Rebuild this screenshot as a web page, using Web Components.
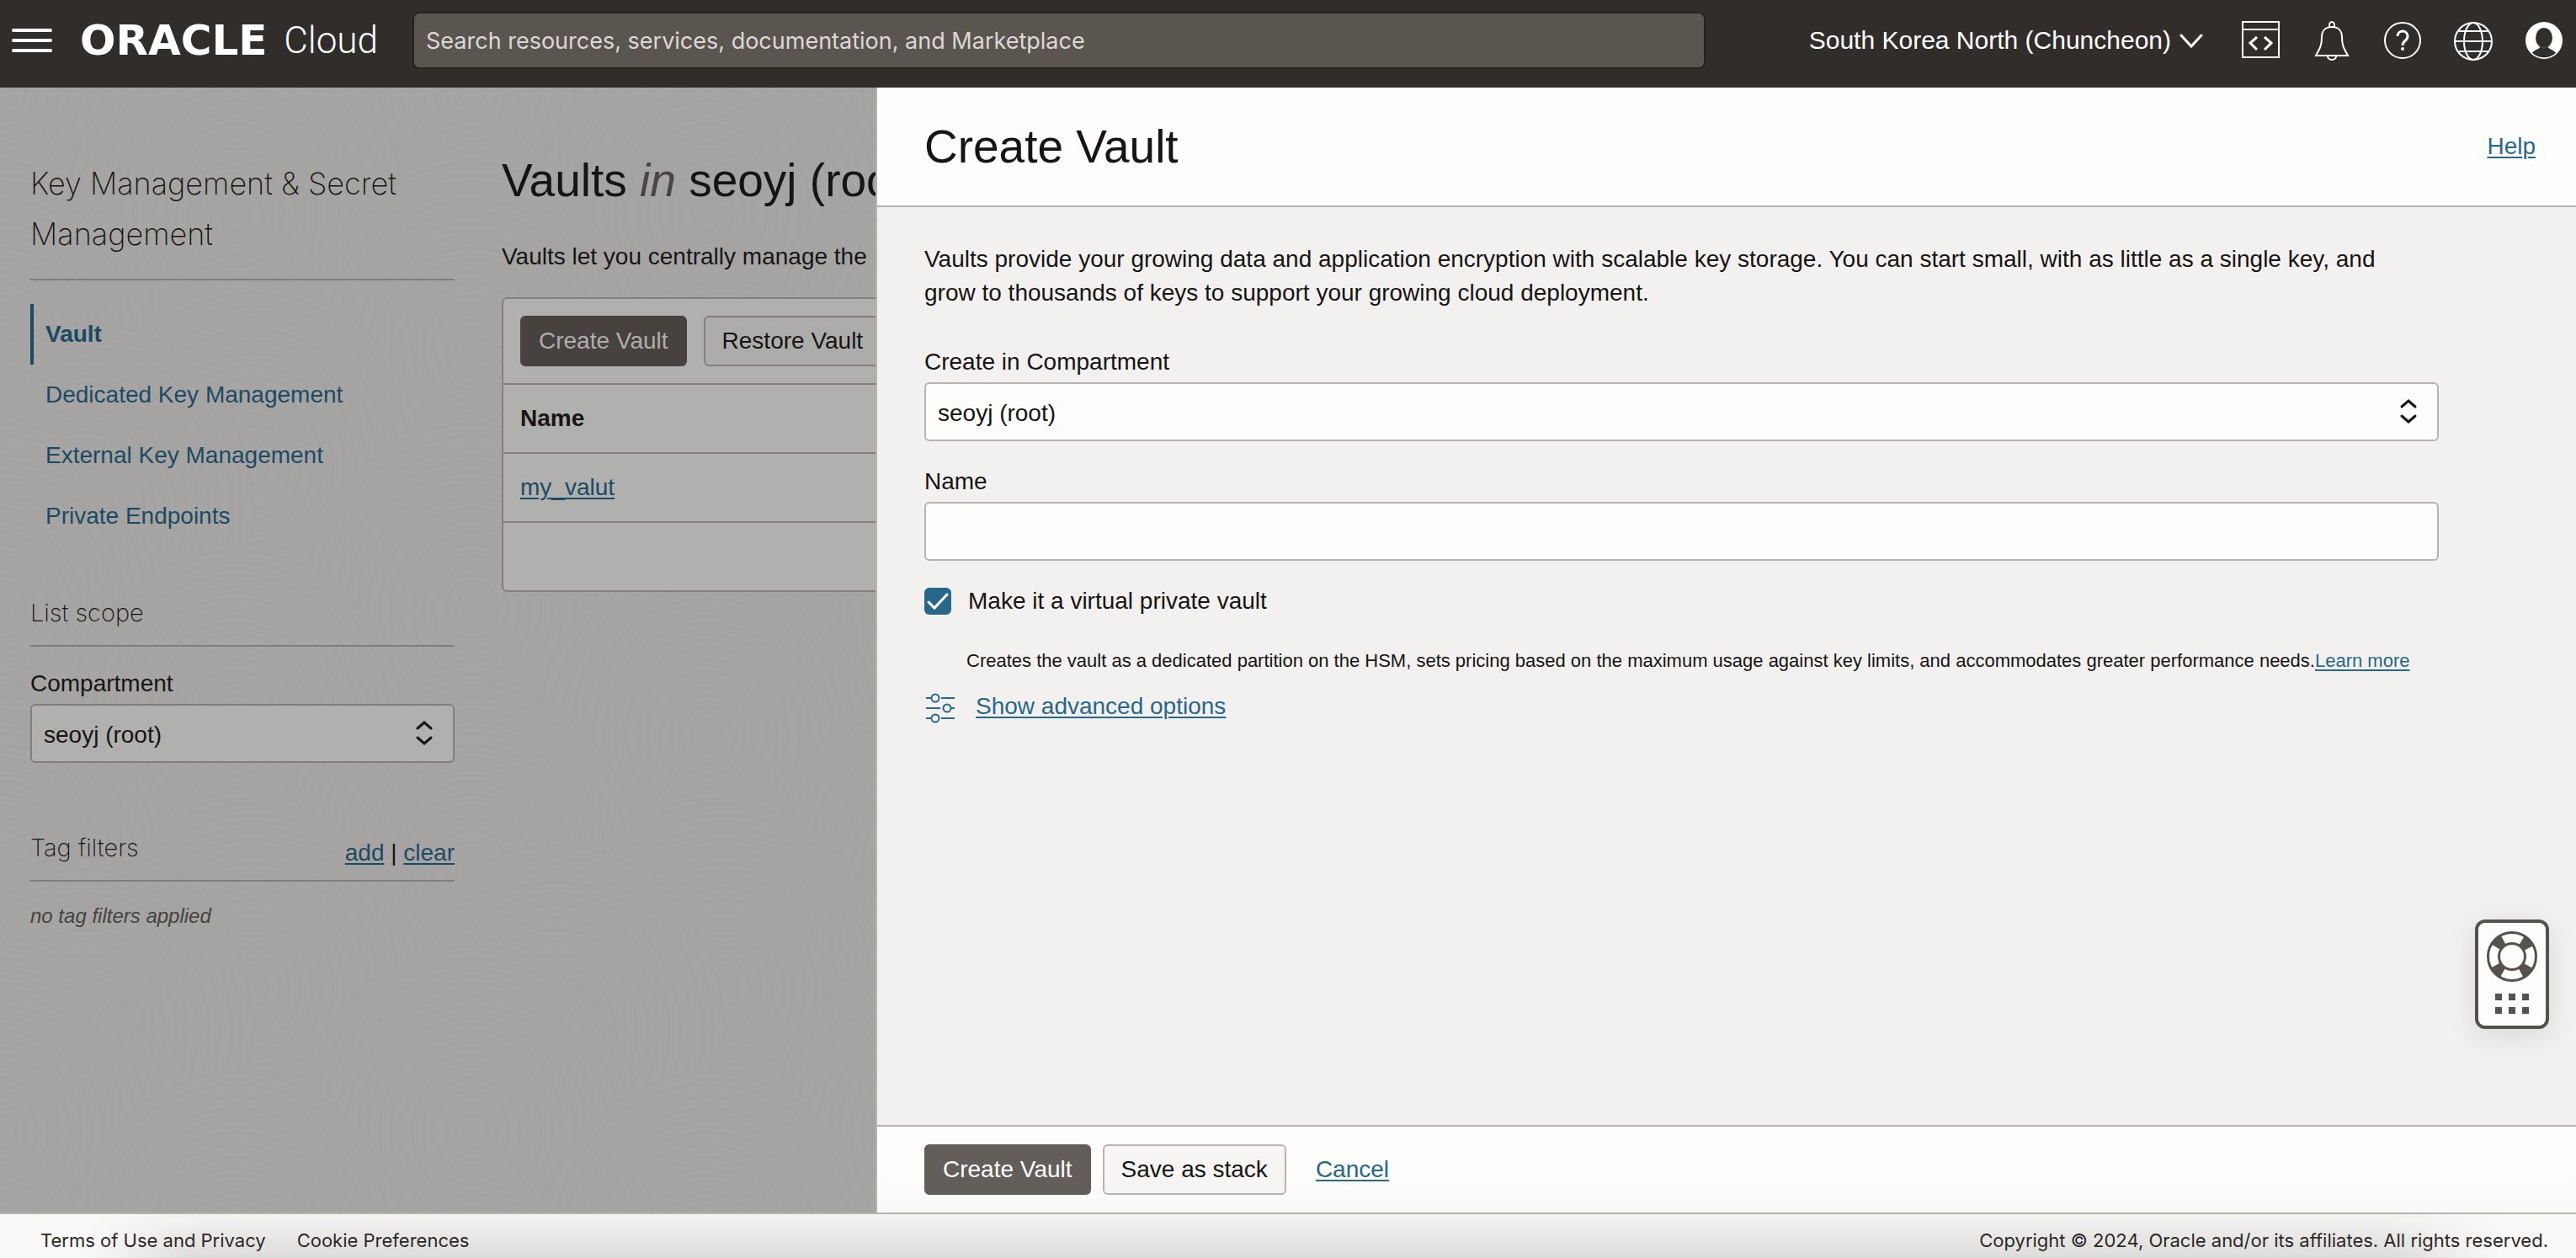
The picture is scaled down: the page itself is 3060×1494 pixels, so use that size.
<!DOCTYPE html>
<html lang="en">
<head>
<meta charset="utf-8">
<title>Create Vault - Oracle Cloud</title>
<style>
  :root {
    --font: "Liberation Sans", Arial, sans-serif;
    --font-ui: Inter, sans-serif;
    --ink: #161513;
    --link: #27678a;
    --line: #b9b3ad;
    --surface: #fdfdfc;
  }
  html, body { margin: 0; height: 100%; }
  body { font-family: var(--font); font-size: 28px; line-height: 40px; color: var(--ink); }
</style>
</head>
<body>
<cloud-app></cloud-app>

<script>
const define = (name, html, setup) => {
  const template = document.createElement('template');
  template.innerHTML = html;
  customElements.define(name, class extends HTMLElement {
    constructor() {
      super();
      this.attachShadow({ mode: 'open' }).append(template.content.cloneNode(true));
    }
    connectedCallback() { if (setup) setup(this, this.shadowRoot); }
  });
};

/* Top bar */
define('cloud-header', `
<style>
  :host { display: flex; align-items: center; box-sizing: border-box; height: 104px; padding: 0 14px 8px; background: #312d2a; color: #fff; flex: none; }
  button { background: none; border: 0; padding: 0; margin: 0; color: inherit; font: inherit; display: flex; align-items: center; }
  svg { display: block; fill: none; stroke: #fff; stroke-width: 2; }
  .menu { margin-right: 33px; }
  .logo { display: flex; align-items: center; justify-content: space-between; width: 354px; margin-right: 41px; color: #fff; text-decoration: none; white-space: nowrap; }
  .brand { font: 700 50px/60px "DejaVu Sans", sans-serif; }
  .product { font: 300 44px/60px Roboto, sans-serif; }
  input { flex: 1; min-width: 0; height: 68px; box-sizing: border-box; margin: 0 123px 0 0; padding: 0 14px; border: 2px solid #252220; border-radius: 8px; background: #5b5550; color: #fff; font: 27px var(--font-ui); }
  input::placeholder { color: #dcd8d5; opacity: 1; }
  .region { font-size: 30px; gap: 10px; margin-right: 45px; white-space: nowrap; }
  nav { display: flex; gap: 36px; }
</style>
<button class="menu" aria-label="Menu"><svg width="48" height="28" viewBox="0 0 48 28" stroke-linecap="round" style="stroke-width:4"><path d="M2 2h44M2 14h44M2 26h44"/></svg></button>
<a class="logo" href="#"><span class="brand">ORACLE</span> <span class="product">Cloud</span></a>
<input type="search" aria-label="Search" placeholder="Search resources, services, documentation, and Marketplace">
<button class="region">South Korea North (Chuncheon)<svg width="28" height="20" viewBox="0 0 28 20" style="stroke-width:3" stroke-linecap="round"><path d="M2 4l12 13L26 4"/></svg></button>
<nav>
  <button aria-label="Developer tools"><svg width="48" height="48" viewBox="0 0 48 48"><path d="M2 2h43v42H2zM2 11h43"/><path d="M19 20l-8 7 8 8M28 20l8 7-8 8" style="stroke-width:3"/></svg></button>
  <button aria-label="Announcements"><svg width="48" height="48" viewBox="0 0 48 48"><path d="M21 8V6a3 4 0 0 1 6 0v2M24 8c-8 0-12 5-12 12 0 10-2 13-7 22h38c-5-9-7-12-7-22 0-7-4-12-12-12zM19 43a5 4 0 0 0 10 0"/></svg></button>
  <button aria-label="Help"><svg width="48" height="48" viewBox="0 0 48 48"><circle cx="24" cy="24" r="21"/><path d="M18 19c0-8 12-8 12 0 0 6-6 5-6 11" style="stroke-width:3"/><circle cx="24" cy="34" r="2" fill="#fff" stroke="none"/></svg></button>
  <button aria-label="Language"><svg width="48" height="48" viewBox="0 0 48 48"><circle cx="24" cy="25" r="22"/><ellipse cx="24" cy="25" rx="11" ry="22"/><path d="M2 25h44M7 13h34M7 37h34"/></svg></button>
  <button aria-label="Profile"><svg width="48" height="48" viewBox="0 0 48 48" stroke="none"><circle cx="24" cy="24" r="22" fill="#fff" stroke="none"/><ellipse cx="24" cy="21" rx="10" ry="12" fill="#312d2a" stroke="none"/><path d="M10 39c2-4 8-4 10-8 2 3 6 3 8 0 2 4 8 4 10 8-8 7-20 7-28 0z" fill="#312d2a" stroke="none"/></svg></button>
</nav>
`);

/* Faint concentric-ring texture behind the dimmed page */
define('ring-texture', `
<style>
  :host { display: block; position: absolute; inset: 0; z-index: -1; }
  svg { display: block; width: 100%; height: 100%; }
</style>
<svg aria-hidden="true"><defs><pattern id="p" width="560" height="620" patternUnits="userSpaceOnUse"><rect width="560" height="620" fill="#a6a5a4"/></pattern></defs><rect width="100%" height="100%" fill="url(#p)"/></svg>
`, (el, root) => {
  const pattern = root.querySelector('pattern');
  const ns = 'http://www.w3.org/2000/svg';
  const centres = [[0,0],[560,0],[280,150],[0,310],[560,310],[300,450],[100,500],[0,620],[560,620],[280,770]];
  for (const [cx, cy] of centres) {
    for (let r = 200; r > 6; r -= 13) {
      const e = document.createElementNS(ns, 'ellipse');
      for (const [k, v] of Object.entries({ cx, cy, rx: r, ry: Math.round(r * 1.1), fill: '#a6a5a4', stroke: '#a4a3a2', 'stroke-width': 4 })) e.setAttribute(k, v);
      pattern.append(e);
    }
  }
});

/* Label plus drop-down or text box */
define('form-field', `
<style>
  :host { display: flex; flex-direction: column; gap: 4px; }
  .box { display: grid; }
  .box > * { grid-area: 1 / 1; }
  select, input { appearance: none; box-sizing: border-box; width: 100%; height: 70px; margin: 0; padding: 4px 14px 0; border: 2px solid var(--field-line, var(--line)); border-radius: 6px; background: var(--field-bg, var(--surface)); color: inherit; font: inherit; }
  svg { justify-self: end; align-self: center; margin-right: 24px; pointer-events: none; fill: none; stroke: currentColor; stroke-width: 3; stroke-linecap: round; }
</style>
<label for="control"></label>
<div class="box"></div>
`, (el, root) => {
  root.querySelector('label').textContent = el.getAttribute('label');
  const box = root.querySelector('.box');
  box.innerHTML = el.hasAttribute('option')
    ? '<select id="control"><option></option></select><svg width="24" height="36" viewBox="0 0 24 36"><path d="M4 12l8-7 8 7M4 23l8 7 8-7"/></svg>'
    : '<input id="control" type="text">';
  if (el.hasAttribute('option')) box.querySelector('option').textContent = el.getAttribute('option');
});

define('ui-button', `
<style>
  :host { display: block; }
  button { box-sizing: border-box; height: 60px; padding: 0 20px; border: 2px solid var(--btn-line, var(--line)); border-radius: 6px; background: var(--btn-bg, #f7f5f4); color: var(--btn-ink, var(--ink)); font: inherit; white-space: nowrap; display: block; }
</style>
<button type="button"><slot></slot></button>
`);

define('side-nav', `
<style>
  :host { display: block; box-sizing: border-box; width: 504px; padding-top: 84px; flex: none; }
  h1, h2, p { margin: 0; font-weight: 200; }
  h1, h2, .tags { border-bottom: 2px solid #827f7b; }
  h1 { font: 200 36px/60px var(--font-ui); padding-bottom: 23px; }
  h2 { font: 200 29px/40px var(--font-ui); padding-bottom: 18px; }
  nav { margin: 28px 0 59px; }
  nav a { display: block; height: 72px; line-height: 72px; box-sizing: border-box; padding-left: 14px; border-left: 4px solid transparent; text-decoration: none; }
  nav a.on { border-color: #1d4a63; font-weight: 700; }
  a { color: #1d4a63; }
  form-field { margin: 24px 0 81px; --field-bg: #b0b0ae; --field-line: #827f7b; }
  .tags { display: flex; justify-content: space-between; align-items: flex-end; padding-bottom: 18px; }
  .tags h2 { border: 0; padding: 0; }
  .tags span { line-height: 28px; }
  .tags a { text-underline-offset: 3px; text-decoration-thickness: 2px; }
  p { margin-top: 21px; font: italic 24px/40px var(--font); color: #454341; }
</style>
<h1>Key Management &amp; Secret Management</h1>
<nav>
  <a class="on" href="#">Vault</a>
  <a href="#">Dedicated Key Management</a>
  <a href="#">External Key Management</a>
  <a href="#">Private Endpoints</a>
</nav>
<h2>List scope</h2>
<form-field label="Compartment" option="seoyj (root)"></form-field>
<div class="tags"><h2>Tag filters</h2><span><a href="#">add</a> | <a href="#">clear</a></span></div>
<p>no tag filters applied</p>
`);

define('vault-list', `
<style>
  :host { display: block; flex: 1; min-width: 0; padding-top: 80px; white-space: nowrap; }
  h1 { margin: 0 0 41px; font: 400 55px/60px var(--font); }
  em { color: #4a4442; }
  p { margin: 0 0 28px; }
  .card { border: 2px solid #85807d; border-radius: 6px; background: #b0b0ae; }
  .bar { display: flex; gap: 20px; padding: 20px; border-bottom: 2px solid #85807d; }
  .primary { --btn-bg: #47413f; --btn-line: #47413f; --btn-ink: #b0aeac; }
  .plain { --btn-bg: #acacaa; --btn-line: #85807d; }
  table { width: 100%; border-collapse: separate; border-spacing: 0; }
  th, td { box-sizing: border-box; height: 82px; padding: 0 20px; text-align: left; border-bottom: 2px solid #85807d; }
  tfoot td { border: 0; height: 80px; }
  a { color: #1d4a63; text-underline-offset: 3px; text-decoration-thickness: 2px; }
</style>
<h1>Vaults <em>in</em> seoyj (root)</h1>
<p>Vaults let you centrally manage the</p>
<div class="card">
  <div class="bar"><ui-button class="primary">Create Vault</ui-button><ui-button class="plain">Restore Vault</ui-button></div>
  <table>
    <thead><tr><th>Name</th></tr></thead>
    <tbody><tr><td><a href="#">my_valut</a></td></tr></tbody>
    <tfoot><tr><td></td></tr></tfoot>
  </table>
</div>
`);

define('create-drawer', `
<style>
  :host { position: absolute; inset: 0 0 0 1040px; display: flex; flex-direction: column; box-sizing: border-box; border-left: 2px solid var(--line); background: #f3f1f0; }
  header { display: flex; align-items: center; justify-content: space-between; height: 140px; padding: 0 48px 0 56px; border-bottom: 2px solid var(--line); background: var(--surface); }
  h1 { margin: 0; font: 400 55px/60px var(--font); }
  a { color: var(--link); text-underline-offset: 3px; text-decoration-thickness: 2px; }
  main { flex: 1; padding: 42px 163px 0 56px; }
  p { margin: 0; padding-right: 40px; }
  .fields { display: flex; flex-direction: column; gap: 28px; margin-top: 42px; }
  .check { display: flex; align-items: center; gap: 20px; }
  .tick { display: grid; width: 32px; height: 32px; }
  .tick > * { grid-area: 1 / 1; }
  .tick input { appearance: none; margin: 0; width: 32px; height: 32px; border-radius: 6px; background: var(--link); }
  .tick svg { pointer-events: none; fill: none; stroke: #fff; stroke-width: 3; stroke-linecap: round; }
  small { display: block; margin: 31px 0 14px 50px; font-size: 22px; line-height: 40px; }
  .adv { display: flex; align-items: center; gap: 23px; }
  .adv svg { fill: none; stroke: var(--link); stroke-width: 2; }
  footer { display: flex; align-items: center; gap: 14px; height: 102px; padding-left: 56px; border-top: 2px solid var(--line); background: linear-gradient(var(--surface) 60%, #f8f8f6); }
  footer a { margin-left: 21px; }
  .primary { --btn-bg: #645e5a; --btn-line: #645e5a; --btn-ink: #fff; }
</style>
<header><h1>Create Vault</h1><a href="#">Help</a></header>
<main>
  <p>Vaults provide your growing data and application encryption with scalable key storage. You can start small, with as little as a single key, and grow to thousands of keys to support your growing cloud deployment.</p>
  <div class="fields">
    <form-field label="Create in Compartment" option="seoyj (root)"></form-field>
    <form-field label="Name"></form-field>
    <div class="check"><span class="tick"><input id="private" type="checkbox" checked><svg width="32" height="32" viewBox="0 0 32 32"><path d="M5 17l7 7L27 8"/></svg></span><label for="private">Make it a virtual private vault</label></div>
  </div>
  <small>Creates the vault as a dedicated partition on the HSM, sets pricing based on the maximum usage against key limits, and accommodates greater performance needs.<a href="#">Learn more</a></small>
  <div class="adv"><svg width="38" height="40" viewBox="0 0 38 40"><path d="M2 10h6M20 10h16M2 22h17M31 22h5M2 34h6M20 34h16"/><circle cx="13" cy="10" r="4.500"/><circle cx="27" cy="22" r="4.500"/><circle cx="13" cy="34" r="4.500"/></svg><a href="#">Show advanced options</a></div>
</main>
<footer><ui-button class="primary">Create Vault</ui-button><ui-button>Save as stack</ui-button><a href="#">Cancel</a></footer>
`);

/* Floating support launcher */
define('help-widget', `
<style>
  :host { position: absolute; right: 32px; bottom: 218px; }
  button { display: block; box-sizing: border-box; width: 88px; height: 130px; padding: 0; border: 4px solid #56514d; border-radius: 12px; background: var(--surface); box-shadow: 0 8px 36px rgba(0,0,0,.1); }
  svg { display: block; }
</style>
<button aria-label="Support"><svg width="80" height="122" viewBox="0 0 80 122">
  <circle cx="40" cy="40" r="22" fill="none" stroke="#56514d" stroke-width="13" stroke-dasharray="12 22.56" stroke-dashoffset="-11.3"/>
  <circle cx="40" cy="40" r="28.500" fill="none" stroke="#56514d" stroke-width="3"/><circle cx="40" cy="40" r="15.500" fill="none" stroke="#56514d" stroke-width="3"/>
  <path fill="#56514d" d="M20 84h8v8h-8zM36 84h8v8h-8zM52 84h8v8h-8zM20 100h8v8h-8zM36 100h8v8h-8zM52 100h8v8h-8z"/></svg></button>
`);

define('cloud-footer', `
<style>
  :host { display: flex; align-items: center; gap: 37px; flex: none; box-sizing: border-box; height: 54px; padding: 10px 33px 0 48px; border-top: 2px solid var(--line); font: 22px/32px var(--font-ui); color: #2b2927;
    background: linear-gradient(90deg, #faf9f8 100px, transparent 230px calc(100% - 220px), #faf9f8 calc(100% - 90px)), linear-gradient(#f5f4f3, #dddcdb); }
  a { color: inherit; text-decoration: none; }
  span { margin-left: auto; }
</style>
<a href="#">Terms of Use and Privacy</a><a href="#">Cookie Preferences</a><span>Copyright © 2024, Oracle and/or its affiliates. All rights reserved.</span>
`);

define('cloud-app', `
<style>
  :host { display: flex; flex-direction: column; min-height: 100vh; }
  .page { position: relative; z-index: 0; flex: 1; display: flex; gap: 56px; padding-left: 36px; overflow: hidden; background: #a6a5a4; }
</style>
<cloud-header></cloud-header>
<div class="page">
  <ring-texture></ring-texture>
  <side-nav></side-nav>
  <vault-list></vault-list>
  <create-drawer></create-drawer>
  <help-widget></help-widget>
</div>
<cloud-footer></cloud-footer>
`);
</script>
</body>
</html>
